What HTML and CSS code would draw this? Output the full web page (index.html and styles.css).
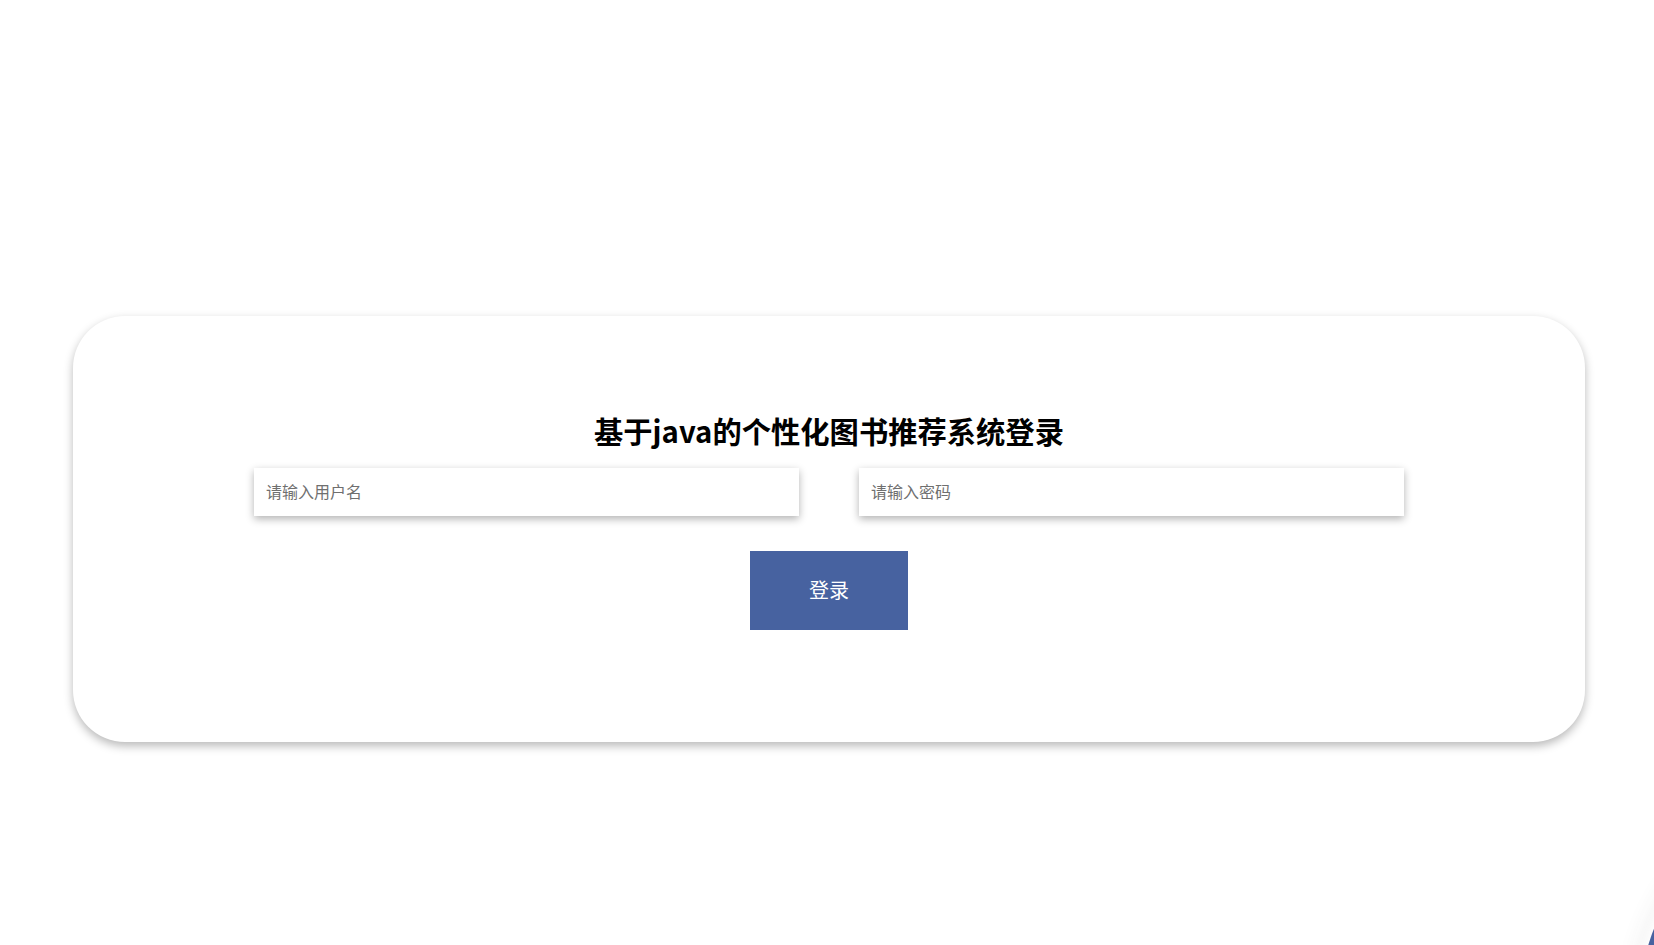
FILE: index.html
```html
<!DOCTYPE html>
<html lang="zh-CN">
<head>
<meta charset="utf-8">
<title>基于java的个性化图书推荐系统登录</title>
<link rel="stylesheet" href="styles.css">
</head>
<body>
<div class="page">
  <div class="card">
    <h1 class="title">基于java的个性化图书推荐系统登录</h1>
    <div class="fields">
      <input class="field" type="text" placeholder="请输入用户名">
      <input class="field" type="password" placeholder="请输入密码">
    </div>
    <div class="actions">
      <button class="login-btn" type="button">登录</button>
    </div>
  </div>
</div>
<div class="corner-blob"></div>
</body>
</html>
```
FILE: styles.css
```css
html, body {
  margin: 0;
  padding: 0;
  height: 100%;
  background: #ffffff;
  overflow: hidden;
  font-family: "Noto Sans CJK SC", "Noto Sans", sans-serif;
}

.page {
  padding-top: 316px;
  padding-left: 73px;
}

.card {
  width: 1512px;
  box-sizing: border-box;
  padding: 94px 0 112px;
  background: #ffffff;
  border-radius: 52px;
  box-shadow: 0 4px 10px rgba(0, 0, 0, 0.28);
  display: flex;
  flex-direction: column;
  align-items: center;
}

.title {
  margin: 0;
  font-size: 29.3px;
  line-height: 40px;
  font-weight: 700;
  color: #000000;
}

.fields {
  margin-top: 18px;
  display: flex;
  gap: 60px;
}

.field {
  width: 545px;
  height: 48px;
  box-sizing: border-box;
  border: none;
  outline: none;
  padding: 0 12px 3px;
  font-family: "Noto Sans CJK SC", "Noto Sans", sans-serif;
  font-size: 16px;
  color: #333333;
  background: #ffffff;
  box-shadow: 0 3px 8px rgba(0, 0, 0, 0.3);
}

.field::placeholder {
  color: #6f6f6f;
}

.actions {
  margin-top: 35px;
}

.login-btn {
  width: 158px;
  height: 79px;
  border: none;
  background: #4762a0;
  color: #ffffff;
  font-family: "Noto Sans CJK SC", "Noto Sans", sans-serif;
  font-size: 20px;
  padding: 0 0 3px;
  cursor: pointer;
}

.corner-blob {
  position: fixed;
  left: 1640px;
  top: 802px;
  width: 400px;
  height: 400px;
  border-radius: 50%;
  background: #4762a0;
  box-shadow: 0 0 10px 4px rgba(255, 255, 255, 1), 0 0 22px 8px rgba(0, 0, 0, 0.07);
}
```
